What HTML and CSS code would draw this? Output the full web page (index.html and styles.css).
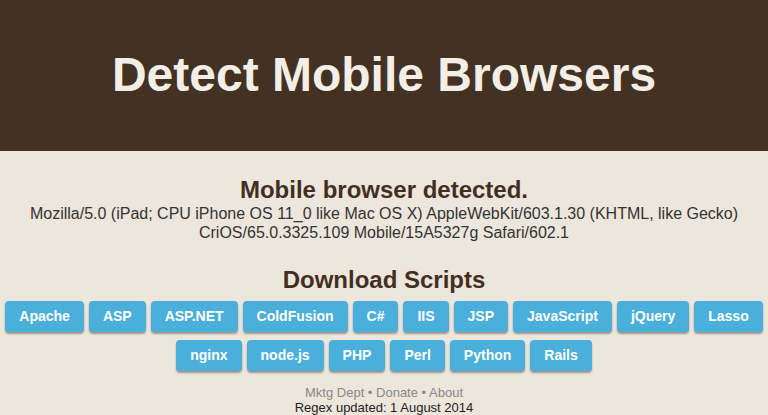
FILE: index.html
```html
<!DOCTYPE html>
<html>
<head>
<meta charset="utf-8">
<link rel="stylesheet" href="styles.css">
</head>
<body>
<header class="masthead">
  <h1 class="title">Detect Mobile Browsers</h1>
</header>
<main class="content">
  <section class="detect">
    <h2 class="heading">Mobile browser detected.</h2>
    <p class="ua">Mozilla/5.0 (iPad; CPU iPhone OS 11_0 like Mac OS X) AppleWebKit/603.1.30 (KHTML, like Gecko) CriOS/65.0.3325.109 Mobile/15A5327g Safari/602.1</p>
  </section>
  <section class="downloads">
    <h2 class="heading">Download Scripts</h2>
    <div class="buttons">
      <a class="btn">Apache</a><a class="btn">ASP</a><a class="btn">ASP.NET</a><a class="btn">ColdFusion</a><a class="btn">C#</a><a class="btn">IIS</a><a class="btn">JSP</a><a class="btn">JavaScript</a><a class="btn">jQuery</a><a class="btn">Lasso</a><a class="btn">nginx</a><a class="btn">node.js</a><a class="btn">PHP</a><a class="btn">Perl</a><a class="btn">Python</a><a class="btn">Rails</a>
    </div>
  </section>
  <footer class="foot">
    <div class="links"><a>Mktg Dept</a> • <a>Donate</a> • <a>About</a></div>
    <div class="updated">Regex updated: 1 August 2014</div>
  </footer>
</main>
</body>
</html>
```
FILE: styles.css
```css
html, body {
  margin: 0;
  padding: 0;
}
body {
  background: #ede6dc;
  font-family: "Liberation Sans", Arial, sans-serif;
  color: #333;
}
.masthead {
  background: #433124;
  height: 151px;
  display: flex;
  align-items: center;
  justify-content: center;
}
.title {
  margin: 0;
  color: #f3efe6;
  font-size: 48px;
  font-weight: bold;
  line-height: 1;
  padding-bottom: 2px;
}
.content {
  text-align: center;
}
.detect {
  padding-top: 25px;
}
.heading {
  margin: 0;
  color: #432f22;
  font-size: 24px;
  font-weight: bold;
  line-height: 28px;
}
.ua {
  margin: 0;
  font-size: 16px;
  line-height: 19px;
  color: #333;
  padding: 0 20px;
}
.downloads {
  padding-top: 24px;
}
.buttons {
  display: flex;
  flex-wrap: wrap;
  justify-content: center;
  gap: 8px 5px;
  padding: 7px 0 0;
}
.btn {
  display: block;
  background: #4aafda;
  color: #fff;
  font-weight: bold;
  font-size: 14px;
  line-height: 31px;
  height: 31px;
  padding: 0 14px;
  border-radius: 4px;
  box-shadow: 0 2px 2px rgba(0, 0, 0, 0.35);
}
.foot {
  padding-top: 14px;
  font-size: 13px;
  line-height: 15px;
}
.links {
  color: #888;
}
.updated {
  color: #222;
}
```
